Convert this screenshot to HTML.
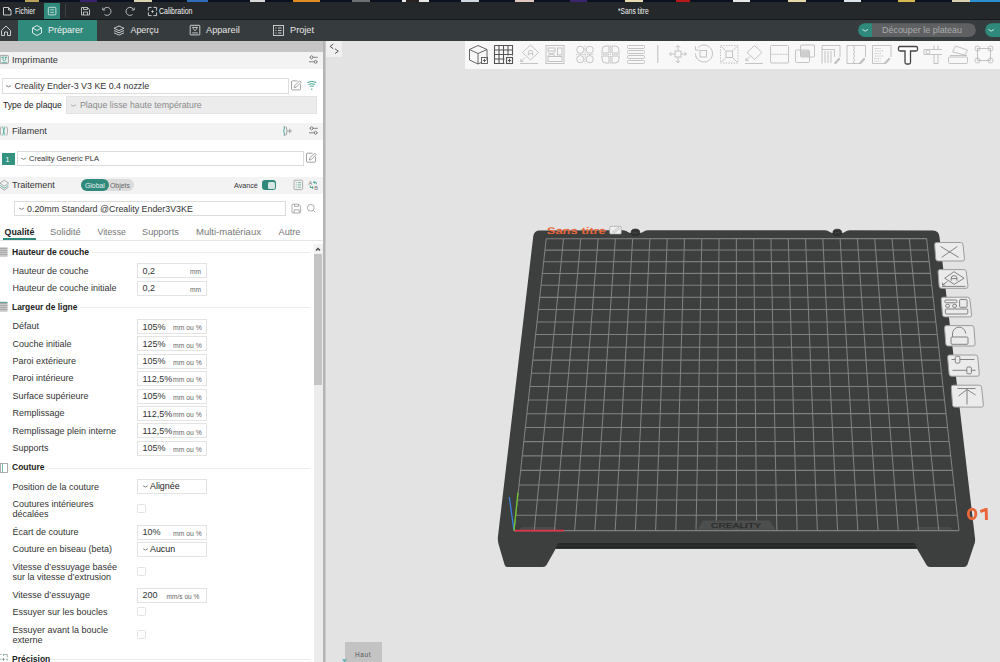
<!DOCTYPE html>
<html><head><meta charset="utf-8"><style>
html,body{margin:0;padding:0;width:1000px;height:662px;overflow:hidden;background:#e3e3e3}
body{position:relative;font-family:"Liberation Sans",sans-serif}
.t{position:absolute;white-space:nowrap}
.r{position:absolute}
</style></head><body>
<div class="r" style="left:0px;top:0px;width:1000px;height:3px;background:#0c1120;"></div>
<div class="r" style="left:25px;top:0px;width:14px;height:2px;background:#b9a15a;"></div>
<div class="r" style="left:80px;top:0px;width:17px;height:2px;background:#3b2270;"></div>
<div class="r" style="left:134px;top:0px;width:18px;height:2px;background:#d9d3b0;"></div>
<div class="r" style="left:187px;top:0px;width:21px;height:2px;background:#2f6db8;"></div>
<div class="r" style="left:250px;top:0px;width:15px;height:2px;background:#d8d8d8;"></div>
<div class="r" style="left:293px;top:0px;width:27px;height:2px;background:#e08a22;"></div>
<div class="r" style="left:352px;top:0px;width:18px;height:2px;background:#6e7174;"></div>
<div class="r" style="left:402px;top:0px;width:4px;height:2px;background:#e8e8e8;"></div>
<div class="r" style="left:406px;top:0px;width:13px;height:2px;background:#2a2222;"></div>
<div class="r" style="left:419px;top:0px;width:10px;height:2px;background:#e8e8e8;"></div>
<div class="r" style="left:461px;top:0px;width:18px;height:2px;background:#cfd8e0;"></div>
<div class="r" style="left:515px;top:0px;width:19px;height:2px;background:#e0c8c0;"></div>
<div class="r" style="left:570px;top:0px;width:17px;height:2px;background:#3a2470;"></div>
<div class="r" style="left:625px;top:0px;width:18px;height:2px;background:#e8dcb0;"></div>
<div class="r" style="left:676px;top:0px;width:14px;height:2px;background:#b81818;"></div>
<div class="r" style="left:733px;top:0px;width:17px;height:2px;background:#e8e8e8;"></div>
<div class="r" style="left:788px;top:0px;width:18px;height:2px;background:#e6d9a8;"></div>
<div class="r" style="left:844px;top:0px;width:17px;height:2px;background:#dde4ea;"></div>
<div class="r" style="left:898px;top:0px;width:17px;height:2px;background:#d8b850;"></div>
<div class="r" style="left:952px;top:0px;width:18px;height:2px;background:#d8d0b0;"></div>
<div class="r" style="left:970px;top:0px;width:30px;height:2px;background:#2a8fd0;"></div>
<div class="r" style="left:0px;top:2px;width:1000px;height:17px;background:#24282b;"></div>
<div class="r" style="left:44px;top:3px;width:16px;height:16px;background:#2f8a7b;"></div>
<div class="r" style="left:65px;top:4px;width:1px;height:13px;background:#3d4245;"></div>
<svg class="r" style="left:0;top:0" width="200" height="19" viewBox="0 0 200 19"><path d="M3.5 7.5 h5 l2.5 2.5 v5 h-7.5z M8.5 7.5 v2.5 h2.5" fill="none" stroke="#d8d8d8" stroke-width="0.9"/><rect x="48.3" y="7.3" width="7.6" height="7.6" rx="1.2" fill="none" stroke="#e8f4f2" stroke-width="0.8"/><path d="M50.2 9.8h3.8 M50.2 12.3h3.8" stroke="#e8f4f2" stroke-width="0.7"/><path d="M81.5 7.5h6l2 2v5.5h-8z M83.5 7.5v2h4v-2 M83.5 15v-3h4v3" fill="none" stroke="#c8c8c8" stroke-width="0.9"/><path d="M103.5 9.5 a4 4 0 1 1 1 5" fill="none" stroke="#c8c8c8" stroke-width="0.9"/><path d="M102.8 7.6v2.4h2.4" fill="none" stroke="#c8c8c8" stroke-width="0.9"/><path d="M133.5 9.5 a4 4 0 1 0 -1 5" fill="none" stroke="#c8c8c8" stroke-width="0.9"/><path d="M134.2 7.6v2.4h-2.4" fill="none" stroke="#c8c8c8" stroke-width="0.9"/><path d="M148.4 10.6v-3.2h3.2 M153.4 7.4h3.2v3.2 M156.6 12.4v3.2h-3.2 M151.6 15.6h-3.2v-3.2 M152.5 10.3v2.4 M151.3 11.5h2.4" fill="none" stroke="#d8d8d8" stroke-width="0.9"/></svg>
<div class="t" style="left:15px;top:7.49px;font-size:8.3px;line-height:9.271px;color:#f4f4f4;font-weight:normal;letter-spacing:0px;transform:scaleX(0.81);transform-origin:0 0">Fichier</div>
<div class="t" style="left:159px;top:7.49px;font-size:8.3px;line-height:9.271px;color:#f4f4f4;font-weight:normal;letter-spacing:0px;transform:scaleX(0.845);transform-origin:0 0">Calibration</div>
<div class="t" style="left:618px;top:7.49px;font-size:8.3px;line-height:9.271px;color:#f4f4f4;font-weight:normal;letter-spacing:0px;transform:scaleX(0.8);transform-origin:0 0">*Sans titre</div>
<div class="r" style="left:0px;top:19px;width:1000px;height:1px;background:#161a1c;"></div>
<div class="r" style="left:0px;top:20px;width:1000px;height:21px;background:#363c3e;"></div>
<div class="r" style="left:18px;top:20px;width:79px;height:21px;background:#2f8a7b;"></div>
<svg class="r" style="left:0;top:19px" width="330" height="22" viewBox="0 19 330 22"><path d="M1.5 35.5v-5l4.5-4.5 4.5 4.5v5h-3v-3.5h-3v3.5z" fill="none" stroke="#dcdcdc" stroke-width="0.9"/><path d="M37 25.5l4.5 2.5v5l-4.5 2.5-4.5-2.5v-5z M32.5 28l4.5 2.5 4.5-2.5" fill="none" stroke="#eaf5f3" stroke-width="0.9"/><path d="M119 26l5 2.3-5 2.3-5-2.3z M114 30.5l5 2.3 5-2.3 M114 32.8l5 2.3 5-2.3" fill="none" stroke="#d8d8d8" stroke-width="0.9"/><rect x="190.2" y="25.3" width="9.6" height="9.6" rx="0.6" fill="none" stroke="#d8d8d8" stroke-width="0.9"/><path d="M192.2 27.4h5.6 M193.3 27.4v1.4l1.7 2 1.7-2v-1.4 M192.2 32.9h5.6" fill="none" stroke="#d8d8d8" stroke-width="0.85"/><rect x="273.5" y="25.5" width="10" height="10" fill="none" stroke="#d8d8d8" stroke-width="0.9"/><path d="M275.5 28h1 M278 28h3.5 M275.5 30.5h1 M278 30.5h3.5 M275.5 33h1 M278 33h3.5" fill="none" stroke="#d8d8d8" stroke-width="0.9"/></svg>
<div class="t" style="left:48px;top:25.36px;font-size:9px;line-height:10.053px;color:#f2f2f2;font-weight:normal;letter-spacing:0px;">Préparer</div>
<div class="t" style="left:130.5px;top:26.45px;font-size:8.9px;line-height:9.941px;color:#e6e6e6;font-weight:normal;letter-spacing:0px;">Aperçu</div>
<div class="t" style="left:206px;top:25.17px;font-size:9.2px;line-height:10.276px;color:#e6e6e6;font-weight:normal;letter-spacing:0px;">Appareil</div>
<div class="t" style="left:290px;top:25.17px;font-size:9.2px;line-height:10.276px;color:#e6e6e6;font-weight:normal;letter-spacing:0px;">Projet</div>
<svg class="r" style="left:850px;top:19px" width="150" height="22" viewBox="850 19 150 22"><path d="M872 23.3 h-7 a6.85 6.85 0 0 0 0 13.7 h7z" fill="#2f8a7b"/><path d="M872 23.3 h97 a6.85 6.85 0 0 1 0 13.7 h-97z" fill="#5e6062"/><path d="M862.5 29.5l2.7 1.6 2.7-1.6" fill="none" stroke="#e8f4f2" stroke-width="0.9"/><path d="M1000 23.3 h-8 a6.85 6.85 0 0 0 0 13.7 h8z" fill="#2f8a7b"/><path d="M988.5 29.5l2.7 1.6 2.7-1.6" fill="none" stroke="#e8f4f2" stroke-width="0.9"/></svg>
<div class="t" style="left:882px;top:25.40px;font-size:8.95px;line-height:9.997px;color:#a9abad;font-weight:normal;letter-spacing:0px;">Découper le plateau</div>
<div class="r" style="left:0px;top:41px;width:323px;height:621px;background:#ffffff;"></div>
<div class="r" style="left:0px;top:41px;width:323px;height:11px;background:#c6c6c6;"></div>
<div class="r" style="left:323px;top:41px;width:1.5px;height:621px;background:#b4b4b4;"></div>
<div class="r" style="left:324.5px;top:41px;width:1.5px;height:621px;background:#cacaca;"></div>
<div class="r" style="left:0px;top:52px;width:323px;height:17px;background:#f3f3f3;"></div>
<div class="r" style="left:0px;top:123px;width:323px;height:17px;background:#f3f3f3;"></div>
<div class="r" style="left:0px;top:177px;width:323px;height:16.5px;background:#f3f3f3;"></div>
<div class="t" style="left:12px;top:53.54px;font-size:9.9px;line-height:11.058px;color:#333;font-weight:normal;letter-spacing:0px;transform:scaleX(0.93);transform-origin:0 0">Imprimante</div>
<div class="t" style="left:12px;top:124.54px;font-size:9.9px;line-height:11.058px;color:#333;font-weight:normal;letter-spacing:0px;transform:scaleX(0.92);transform-origin:0 0">Filament</div>
<div class="t" style="left:12px;top:178.54px;font-size:9.9px;line-height:11.058px;color:#333;font-weight:normal;letter-spacing:0px;transform:scaleX(0.915);transform-origin:0 0">Traitement</div>
<div class="r" style="left:2px;top:78px;width:287px;height:16px;background:#fff;border:1px solid #dcdcdc;box-sizing:border-box"></div>
<div class="t" style="left:14.5px;top:82.45px;font-size:8.9px;line-height:9.941px;color:#333;font-weight:normal;letter-spacing:0px;">Creality Ender-3 V3 KE 0.4 nozzle</div>
<div class="t" style="left:3px;top:100.72px;font-size:8.6px;line-height:9.606px;color:#222;font-weight:normal;letter-spacing:0px;">Type de plaque</div>
<div class="r" style="left:66px;top:96px;width:250.5px;height:18px;background:#ececec;border:1px solid #e3e3e3;box-sizing:border-box"></div>
<div class="t" style="left:80px;top:100.54px;font-size:8.8px;line-height:9.830px;color:#8a8a8a;font-weight:normal;letter-spacing:0px;">Plaque lisse haute température</div>
<div class="r" style="left:2px;top:152.5px;width:12.5px;height:12px;background:#349281;"></div>
<div class="t" style="left:5.5px;top:155.66px;font-size:7px;line-height:7.819px;color:#fff;font-weight:normal;letter-spacing:0px;">1</div>
<div class="r" style="left:17px;top:151px;width:287px;height:15px;background:#fff;border:1px solid #dcdcdc;box-sizing:border-box"></div>
<div class="t" style="left:29px;top:154.71px;font-size:7.5px;line-height:8.377px;color:#333;font-weight:normal;letter-spacing:0px;">Creality Generic PLA</div>
<div class="r" style="left:81px;top:179px;width:53px;height:12px;border-radius:6px;background:#dcdcdc"></div>
<div class="r" style="left:81px;top:179px;width:27.5px;height:12px;border-radius:6px;background:#2f8a7b"></div>
<div class="t" style="left:85.2px;top:182.24px;font-size:7.8px;line-height:8.713px;color:#e8f2f0;font-weight:normal;letter-spacing:0px;transform:scaleX(0.88);transform-origin:0 0">Global</div>
<div class="t" style="left:110px;top:182.24px;font-size:7.8px;line-height:8.713px;color:#666;font-weight:normal;letter-spacing:0px;transform:scaleX(0.88);transform-origin:0 0">Objets</div>
<div class="t" style="left:234px;top:182.48px;font-size:7.2px;line-height:8.042px;color:#333;font-weight:normal;letter-spacing:0px;">Avancé</div>
<div class="r" style="left:262px;top:180px;width:14px;height:10px;border-radius:3px;background:#2f8a7b"></div>
<div class="r" style="left:268px;top:181.5px;width:6.5px;height:7px;border-radius:1.5px;background:#d8e6e3"></div>
<div class="r" style="left:14px;top:201px;width:272px;height:15px;background:#fff;border:1px solid #dcdcdc;box-sizing:border-box"></div>
<div class="t" style="left:27px;top:204.95px;font-size:8.9px;line-height:9.941px;color:#333;font-weight:normal;letter-spacing:0px;">0.20mm Standard @Creality Ender3V3KE</div>
<div class="r" style="left:0px;top:240px;width:323px;height:1px;background:#e6e6e6;"></div>
<div class="r" style="left:3px;top:238.2px;width:33px;height:2px;background:#2f8a7b;"></div>
<div class="t" style="left:4.5px;top:228.49px;font-size:8.85px;line-height:9.885px;color:#222;font-weight:bold;letter-spacing:0px;">Qualité</div>
<div class="t" style="left:50px;top:226.99px;font-size:9.4px;line-height:10.500px;color:#777;font-weight:normal;letter-spacing:0px;">Solidité</div>
<div class="t" style="left:97.5px;top:227.63px;font-size:8.7px;line-height:9.718px;color:#777;font-weight:normal;letter-spacing:0px;">Vitesse</div>
<div class="t" style="left:142px;top:227.17px;font-size:9.2px;line-height:10.276px;color:#777;font-weight:normal;letter-spacing:0px;">Supports</div>
<div class="t" style="left:196px;top:226.90px;font-size:9.5px;line-height:10.611px;color:#777;font-weight:normal;letter-spacing:0px;">Multi-matériaux</div>
<div class="t" style="left:278.5px;top:227.17px;font-size:9.2px;line-height:10.276px;color:#777;font-weight:normal;letter-spacing:0px;">Autre</div>
<div class="r" style="left:314px;top:244px;width:9px;height:418px;background:#ececec;"></div>
<div class="r" style="left:314px;top:244px;width:8px;height:10px;background:#f2f2f2;"></div>
<div class="r" style="left:314px;top:254px;width:8px;height:131px;background:#c4c4c4;"></div>
<svg class="r" style="left:314px;top:244px" width="8" height="10"><path d="M2 6.5l2-2 2 2" fill="none" stroke="#444" stroke-width="1.3"/></svg>
<div class="t" style="left:12px;top:246.79px;font-size:9.405000000000001px;line-height:10.505px;color:#222;font-weight:bold;letter-spacing:0px;transform:scaleX(0.91);transform-origin:0 0">Hauteur de couche</div>
<div class="r" style="left:92px;top:252px;width:218px;height:1px;background:#ececec;"></div>
<div class="t" style="left:12px;top:302.34px;font-size:9.240000000000002px;line-height:10.321px;color:#222;font-weight:bold;letter-spacing:0px;transform:scaleX(0.91);transform-origin:0 0">Largeur de ligne</div>
<div class="r" style="left:80px;top:307.3px;width:230px;height:1px;background:#ececec;"></div>
<div class="t" style="left:12px;top:462.44px;font-size:9.350000000000001px;line-height:10.444px;color:#222;font-weight:bold;letter-spacing:0px;transform:scaleX(0.91);transform-origin:0 0">Couture</div>
<div class="r" style="left:47.5px;top:468.2px;width:262.5px;height:1px;background:#ececec;"></div>
<div class="t" style="left:12px;top:653.54px;font-size:9.350000000000001px;line-height:10.444px;color:#222;font-weight:bold;letter-spacing:0px;transform:scaleX(0.91);transform-origin:0 0">Précision</div>
<div class="r" style="left:50px;top:659px;width:260px;height:1px;background:#ececec;"></div>
<div class="t" style="left:12.5px;top:265.86px;font-size:9px;line-height:10.053px;color:#333;font-weight:normal;letter-spacing:0px;">Hauteur de couche</div>
<div class="t" style="left:12.5px;top:283.36px;font-size:9px;line-height:10.053px;color:#333;font-weight:normal;letter-spacing:0px;">Hauteur de couche initiale</div>
<div class="r" style="left:137px;top:263px;width:70px;height:15px;background:#fff;border:1px solid #e3e3e3;box-sizing:border-box"></div>
<div class="t" style="left:142.5px;top:265.86px;font-size:9px;line-height:10.053px;color:#333;font-weight:normal;letter-spacing:0px;">0,2</div>
<div class="t" style="left:190px;top:267.73px;font-size:6.6px;line-height:7.372px;color:#666;font-weight:normal;letter-spacing:0px;">mm</div>
<div class="r" style="left:137px;top:280.5px;width:70px;height:15px;background:#fff;border:1px solid #e3e3e3;box-sizing:border-box"></div>
<div class="t" style="left:142.5px;top:283.36px;font-size:9px;line-height:10.053px;color:#333;font-weight:normal;letter-spacing:0px;">0,2</div>
<div class="t" style="left:190px;top:286.23px;font-size:6.6px;line-height:7.372px;color:#666;font-weight:normal;letter-spacing:0px;">mm</div>
<div class="t" style="left:12.5px;top:320.56px;font-size:9px;line-height:10.053px;color:#333;font-weight:normal;letter-spacing:0px;">Défaut</div>
<div class="r" style="left:137px;top:319.0px;width:70px;height:15px;background:#fff;border:1px solid #e3e3e3;box-sizing:border-box"></div>
<div class="t" style="left:142.5px;top:321.86px;font-size:9px;line-height:10.053px;color:#333;font-weight:normal;letter-spacing:0px;">105%</div>
<div class="t" style="left:173px;top:323.55px;font-size:6.8px;line-height:7.596px;color:#666;font-weight:normal;letter-spacing:0px;">mm ou %</div>
<div class="t" style="left:12.5px;top:338.96px;font-size:9px;line-height:10.053px;color:#333;font-weight:normal;letter-spacing:0px;">Couche initiale</div>
<div class="r" style="left:137px;top:336.4px;width:70px;height:15px;background:#fff;border:1px solid #e3e3e3;box-sizing:border-box"></div>
<div class="t" style="left:142.5px;top:339.25px;font-size:9px;line-height:10.053px;color:#333;font-weight:normal;letter-spacing:0px;">125%</div>
<div class="t" style="left:173px;top:341.95px;font-size:6.8px;line-height:7.596px;color:#666;font-weight:normal;letter-spacing:0px;">mm ou %</div>
<div class="t" style="left:12.5px;top:356.16px;font-size:9px;line-height:10.053px;color:#333;font-weight:normal;letter-spacing:0px;">Paroi extérieure</div>
<div class="r" style="left:137px;top:353.8px;width:70px;height:15px;background:#fff;border:1px solid #e3e3e3;box-sizing:border-box"></div>
<div class="t" style="left:142.5px;top:355.66px;font-size:9px;line-height:10.053px;color:#333;font-weight:normal;letter-spacing:0px;">105%</div>
<div class="t" style="left:173px;top:359.35px;font-size:6.8px;line-height:7.596px;color:#666;font-weight:normal;letter-spacing:0px;">mm ou %</div>
<div class="t" style="left:12.5px;top:372.56px;font-size:9px;line-height:10.053px;color:#333;font-weight:normal;letter-spacing:0px;">Paroi intérieure</div>
<div class="r" style="left:137px;top:371.2px;width:70px;height:15px;background:#fff;border:1px solid #e3e3e3;box-sizing:border-box"></div>
<div class="t" style="left:142.5px;top:374.06px;font-size:9px;line-height:10.053px;color:#333;font-weight:normal;letter-spacing:0px;">112,5%</div>
<div class="t" style="left:173px;top:375.75px;font-size:6.8px;line-height:7.596px;color:#666;font-weight:normal;letter-spacing:0px;">mm ou %</div>
<div class="t" style="left:12.5px;top:390.96px;font-size:9px;line-height:10.053px;color:#333;font-weight:normal;letter-spacing:0px;">Surface supérieure</div>
<div class="r" style="left:137px;top:388.6px;width:70px;height:15px;background:#fff;border:1px solid #e3e3e3;box-sizing:border-box"></div>
<div class="t" style="left:142.5px;top:391.46px;font-size:9px;line-height:10.053px;color:#333;font-weight:normal;letter-spacing:0px;">105%</div>
<div class="t" style="left:173px;top:394.15px;font-size:6.8px;line-height:7.596px;color:#666;font-weight:normal;letter-spacing:0px;">mm ou %</div>
<div class="t" style="left:12.5px;top:407.66px;font-size:9px;line-height:10.053px;color:#333;font-weight:normal;letter-spacing:0px;">Remplissage</div>
<div class="r" style="left:137px;top:406.0px;width:70px;height:15px;background:#fff;border:1px solid #e3e3e3;box-sizing:border-box"></div>
<div class="t" style="left:142.5px;top:408.86px;font-size:9px;line-height:10.053px;color:#333;font-weight:normal;letter-spacing:0px;">112,5%</div>
<div class="t" style="left:173px;top:410.55px;font-size:6.8px;line-height:7.596px;color:#666;font-weight:normal;letter-spacing:0px;">mm ou %</div>
<div class="t" style="left:12.5px;top:425.86px;font-size:9px;line-height:10.053px;color:#333;font-weight:normal;letter-spacing:0px;">Remplissage plein interne</div>
<div class="r" style="left:137px;top:423.4px;width:70px;height:15px;background:#fff;border:1px solid #e3e3e3;box-sizing:border-box"></div>
<div class="t" style="left:142.5px;top:426.25px;font-size:9px;line-height:10.053px;color:#333;font-weight:normal;letter-spacing:0px;">112,5%</div>
<div class="t" style="left:173px;top:428.95px;font-size:6.8px;line-height:7.596px;color:#666;font-weight:normal;letter-spacing:0px;">mm ou %</div>
<div class="t" style="left:12.5px;top:443.16px;font-size:9px;line-height:10.053px;color:#333;font-weight:normal;letter-spacing:0px;">Supports</div>
<div class="r" style="left:137px;top:440.79999999999995px;width:70px;height:15px;background:#fff;border:1px solid #e3e3e3;box-sizing:border-box"></div>
<div class="t" style="left:142.5px;top:442.65px;font-size:9px;line-height:10.053px;color:#333;font-weight:normal;letter-spacing:0px;">105%</div>
<div class="t" style="left:173px;top:446.35px;font-size:6.8px;line-height:7.596px;color:#666;font-weight:normal;letter-spacing:0px;">mm ou %</div>
<div class="t" style="left:12.5px;top:482.16px;font-size:9px;line-height:10.053px;color:#333;font-weight:normal;letter-spacing:0px;">Position de la couture</div>
<div class="r" style="left:137px;top:479.4px;width:70px;height:14.5px;background:#fff;border:1px solid #e3e3e3;box-sizing:border-box"></div>
<svg class="r" style="left:142px;top:479.4px" width="8" height="14"><path d="M1.2 6.8l2.3 1.3 2.3-1.3" fill="none" stroke="#666" stroke-width="0.8"/></svg>
<div class="t" style="left:150px;top:481.85px;font-size:8.9px;line-height:9.941px;color:#222;font-weight:normal;letter-spacing:0px;">Alignée</div>
<div class="t" style="left:12.5px;top:499.25px;font-size:9px;line-height:10.053px;color:#333;font-weight:normal;letter-spacing:0px;">Coutures intérieures</div>
<div class="t" style="left:12.5px;top:508.56px;font-size:9px;line-height:10.053px;color:#333;font-weight:normal;letter-spacing:0px;">décalées</div>
<div class="r" style="left:137.3px;top:504.4px;width:9px;height:9px;border:1px solid #e2e2e2;border-radius:1.5px;box-sizing:border-box;background:#fff"></div>
<div class="t" style="left:12.5px;top:527.06px;font-size:9px;line-height:10.053px;color:#333;font-weight:normal;letter-spacing:0px;">Écart de couture</div>
<div class="r" style="left:137px;top:524.5px;width:70px;height:15px;background:#fff;border:1px solid #e3e3e3;box-sizing:border-box"></div>
<div class="t" style="left:142.5px;top:527.36px;font-size:9px;line-height:10.053px;color:#333;font-weight:normal;letter-spacing:0px;">10%</div>
<div class="t" style="left:173px;top:530.05px;font-size:6.8px;line-height:7.596px;color:#666;font-weight:normal;letter-spacing:0px;">mm ou %</div>
<div class="t" style="left:12.5px;top:544.25px;font-size:9px;line-height:10.053px;color:#333;font-weight:normal;letter-spacing:0px;">Couture en biseau (beta)</div>
<div class="r" style="left:137px;top:542.4px;width:70px;height:14.5px;background:#fff;border:1px solid #e3e3e3;box-sizing:border-box"></div>
<svg class="r" style="left:142px;top:542.4px" width="8" height="14"><path d="M1.2 6.8l2.3 1.3 2.3-1.3" fill="none" stroke="#666" stroke-width="0.8"/></svg>
<div class="t" style="left:150px;top:544.85px;font-size:8.9px;line-height:9.941px;color:#222;font-weight:normal;letter-spacing:0px;">Aucun</div>
<div class="t" style="left:12.5px;top:561.96px;font-size:9px;line-height:10.053px;color:#333;font-weight:normal;letter-spacing:0px;">Vitesse d’essuyage basée</div>
<div class="t" style="left:12.5px;top:571.96px;font-size:9px;line-height:10.053px;color:#333;font-weight:normal;letter-spacing:0px;">sur la vitesse d’extrusion</div>
<div class="r" style="left:137.3px;top:566.6999999999999px;width:9px;height:9px;border:1px solid #e2e2e2;border-radius:1.5px;box-sizing:border-box;background:#fff"></div>
<div class="t" style="left:12.5px;top:589.86px;font-size:9px;line-height:10.053px;color:#333;font-weight:normal;letter-spacing:0px;">Vitesse d’essuyage</div>
<div class="r" style="left:137px;top:587.5px;width:70px;height:15px;background:#fff;border:1px solid #e3e3e3;box-sizing:border-box"></div>
<div class="t" style="left:142.5px;top:590.36px;font-size:9px;line-height:10.053px;color:#333;font-weight:normal;letter-spacing:0px;">200</div>
<div class="t" style="left:166.5px;top:593.23px;font-size:6.6px;line-height:7.372px;color:#666;font-weight:normal;letter-spacing:0px;">mm/s ou %</div>
<div class="t" style="left:12.5px;top:607.36px;font-size:9px;line-height:10.053px;color:#333;font-weight:normal;letter-spacing:0px;">Essuyer sur les boucles</div>
<div class="r" style="left:137.3px;top:607.1px;width:9px;height:9px;border:1px solid #e2e2e2;border-radius:1.5px;box-sizing:border-box;background:#fff"></div>
<div class="t" style="left:12.5px;top:625.36px;font-size:9px;line-height:10.053px;color:#333;font-weight:normal;letter-spacing:0px;">Essuyer avant la boucle</div>
<div class="t" style="left:12.5px;top:635.36px;font-size:9px;line-height:10.053px;color:#333;font-weight:normal;letter-spacing:0px;">externe</div>
<div class="r" style="left:137.3px;top:629.6999999999999px;width:9px;height:9px;border:1px solid #e2e2e2;border-radius:1.5px;box-sizing:border-box;background:#fff"></div>
<svg class="r" style="left:0;top:40px" width="323" height="622" viewBox="0 40 323 622"><rect x="0.2" y="55.4" width="8.2" height="8.2" rx="0.8" fill="none" stroke="#8f8f8f" stroke-width="0.8"/><path d="M1.5 62.4h5.6" stroke="#4aa898" stroke-width="0.8"/><path d="M1.4 57.2h5.8 M3 57.2 v2.3 l1.3 1.6 1.3 -1.6 v-2.3" fill="none" stroke="#3a9a88" stroke-width="0.9"/><circle cx="4.3" cy="57.7" r="0.6" fill="#fff"/><g fill="none" stroke="#666" stroke-width="0.8"><path d="M309.5 57.3h0.8 M313 57.3h4.8 M309 61.8h5.2 M317 61.8h0.8"/><ellipse cx="311.6" cy="57.3" rx="1.2" ry="1.6"/><ellipse cx="315.6" cy="61.8" rx="1.2" ry="1.6"/><path d="M309.5 128.3h0.8 M313 128.3h4.8 M309 132.8h5.2 M317 132.8h0.8"/><ellipse cx="311.6" cy="128.3" rx="1.2" ry="1.6"/><ellipse cx="315.6" cy="132.8" rx="1.2" ry="1.6"/></g><g fill="none" stroke="#8a8a8a" stroke-width="0.8"><path d="M297.5 80.9h-5a1 1 0 0 0 -1 1v7a1 1 0 0 0 1 1h7a1 1 0 0 0 1 -1v-4.5"/><path d="M294.3 87.7l0.4 -1.9 5 -5 1.5 1.5 -5 5z"/><path d="M312.5 153.2h-5a1 1 0 0 0 -1 1v7a1 1 0 0 0 1 1h7a1 1 0 0 0 1 -1v-4.5"/><path d="M309.3 160l0.4 -1.9 5 -5 1.5 1.5 -5 5z"/></g><g fill="none" stroke="#2b9b8a" stroke-width="0.9"><path d="M307.3 82.5a8 6 0 0 1 9 0 M308.5 84.5a6 4.5 0 0 1 6.6 0 M309.8 86.4a3.5 2.6 0 0 1 4 0"/><path d="M311.8 88.5v1.5"/></g><g fill="none" stroke-width="0.8"><path d="M1 126.5q-1.6 4.5 0 9 M6.8 126.5q1.6 4.5 0 9" stroke="#999"/><path d="M2.6 126.5q2.6 4.5 0 9 M5 126.5q-2.6 4.5 0 9" stroke="#4aa898"/></g><g fill="none" stroke-width="0.8"><path d="M284.8 126.8q-2.3 4.2 0 8.4" stroke="#2b9b8a"/><path d="M283.5 126.8h1.8 M283.5 135.2h1.8 M286.2 127q1.6 4 0 8" stroke="#8a8a8a"/><path d="M287.5 131h4.5 M289.75 128.7v4.6" stroke="#8a8a8a"/></g><g fill="none" stroke-width="0.8"><path d="M4.3 180.2l4.2 3-4.2 3-4.2-3z" stroke="#999"/><path d="M0.1 185.3l4.2 3 4.2-3" stroke="#4aa898"/><path d="M0.1 187.2l4.2 3 4.2-3" stroke="#999"/></g><g fill="none" stroke-width="0.8"><rect x="294" y="180.2" width="8.6" height="9.4" rx="1" stroke="#999"/><path d="M295.8 182.6h0.9 M297.8 182.6h3.2 M295.8 184.9h0.9 M297.8 184.9h3.2 M295.8 187.2h0.9 M297.8 187.2h3.2" stroke="#5a9f92"/></g><g fill="none" stroke="#3a9a88" stroke-width="0.9"><path d="M316.2 184.3v-2h-2.8 M314.5 181.2l-1.2 1.1 1.2 1.1 M310.3 185.5v2h2.8 M312 186.4l1.2 1.1-1.2 1.1"/></g><text x="308.6" y="185.3" font-size="5.6" fill="#777" font-family="Liberation Sans">A</text><text x="314.2" y="189.6" font-size="5.6" fill="#777" font-family="Liberation Sans">B</text><g fill="none" stroke="#999" stroke-width="0.8"><path d="M292.8 204.2h5.8l2 2v6a0.8 0.8 0 0 1 -0.8 0.8h-7a0.8 0.8 0 0 1 -0.8 -0.8v-7.2a0.8 0.8 0 0 1 0.8 -0.8z M294.5 204.2v2.2h4v-2.2 M294.2 213v-3.2h5v3.2"/><circle cx="310.8" cy="207.8" r="3.4"/><path d="M313.3 210.3l2 2"/></g><g fill="none" stroke="#666" stroke-width="0.8"><path d="M6 85.5l2.5 1.4 2.5-1.4"/><path d="M71 104.8l2.5 1.4 2.5-1.4" stroke="#999"/><path d="M21 158l2.5 1.4 2.5-1.4"/><path d="M19 208l2.5 1.4 2.5-1.4"/></g><g fill="#a8a8a8"><rect x="0" y="247.5" width="7.5" height="9"/><rect x="0" y="302.5" width="7.5" height="9"/></g><g stroke="#e0e0e0" stroke-width="0.6"><path d="M0 249.5h7.5 M0 251.5h7.5 M0 253.5h7.5 M0 255.5h7.5 M0 304.5h7.5 M0 306.5h7.5 M0 308.5h7.5 M0 310.5h7.5"/></g><path d="M0 302.3h7.5" stroke="#2b8b7a" stroke-width="0.8"/><rect x="0.5" y="463.5" width="7" height="9" fill="none" stroke="#999" stroke-width="0.8"/><path d="M2.5 464v8" stroke="#7fbfb3" stroke-width="1"/><path d="M0 654.5h1.5 M3 654.5h4.3v3 M7.3 659v1.5" fill="none" stroke="#999" stroke-width="0.8"/><path d="M3.5 654.5v1.3 M0 659.3h1.3 M6 659.3h1.3" stroke="#4aa898" stroke-width="0.8"/><path d="M2.3 659.3h2.4 M3.5 658.1v2.4" stroke="#777" stroke-width="0.8"/></svg>
<div class="r" style="left:326px;top:41px;width:674px;height:621px;background:#e3e3e3;"></div>
<div class="r" style="left:326px;top:41px;width:16px;height:16px;background:#f0f0f0;"></div>
<svg class="r" style="left:326px;top:41px" width="16" height="16"><path d="M7.3 3l-3.2 2.4 3.2 2.4 M9 7.8l3.3 2.4-3.3 2.4" fill="none" stroke="#444" stroke-width="0.9"/></svg>
<div class="r" style="left:464.5px;top:41px;width:535.5px;height:27.6px;background:#f8f8f8;"></div>
<div class="r" style="left:344.5px;top:641.5px;width:37.2px;height:21px;background:#c3c3c3;"></div>
<svg class="r" style="left:340px;top:655px" width="10" height="7"><path d="M2 4.5 L7 4.5 L4.5 7 Z" fill="#4a9be0"/><path d="M3.2 5.2 L5.8 5.2 L4.5 6.6 Z" fill="#6fc52a"/></svg>
<div class="t" style="left:355px;top:650.51px;font-size:6.4px;line-height:7.149px;color:#555;font-weight:normal;letter-spacing:0.7px;">Haut</div>
<svg class="r" style="left:0;top:0" width="1000" height="662" viewBox="0 0 1000 662"><path d="M533.3 236 Q534 230.4 540 230.4 L622.9 230.3 Q625.9 230.3 627.9 232 Q629.4 233.1 630.9 233.1 L639.9 233.1 Q641.4 233.1 642.9 232 Q644.9 230.3 647.9 230.3 L824.8 230.3 Q827.8 230.3 829.8 232 Q831.3 233.1 832.8 233.1 L841.8 233.1 Q843.3 233.1 844.8 232 Q846.8 230.3 849.8 230.3 L933 230.4 Q939 230.4 939.5 237 L975 538 Q975.5 542 974 545 L967.5 564.5 Q966.5 567 963.5 567 L930 567 Q927.5 567 926.5 565 L917 548.7 L555.7 548.7 L546.5 565 Q545.5 567 543 567 L507.5 567 Q505 567 504.5 564.5 L498.5 544 Q497.5 540 498 536 Z" fill="#3d3e3e"/><ellipse cx="635.4" cy="232.4" rx="4.3" ry="3.3" fill="#313232" stroke="#252626" stroke-width="0.7"/><ellipse cx="837.3" cy="232.5" rx="4.3" ry="3.3" fill="#313232" stroke="#252626" stroke-width="0.7"/><path d="M632.8 233.2 q2.6 -1.8 5.2 0" fill="none" stroke="#484949" stroke-width="0.8"/><path d="M834.7 233.3 q2.6 -1.8 5.2 0" fill="none" stroke="#484949" stroke-width="0.8"/><path d="M559.5 543 L913 543 Q914.5 543 915.3 544.3 L917.3 548.7 L555.5 548.7 L557.5 544.3 Q558.2 543 559.5 543 Z" fill="#262828"/><path d="M557.2 545 L915.6 545 L916.1 546.1 L556.7 546.1 Z" fill="#303232"/><path d="M519 529.8 L522 527 L555 527 L558 529.8 Z" fill="#4a4b4b"/><path d="M914 529.8 L917 527 L950 527 L953 529.8 Z" fill="#4a4b4b"/><path d="M546.20 238.70L514.00 530.60 M546.20 238.70L926.60 238.60 M563.49 238.70L534.22 530.60 M544.94 250.12L927.87 250.02 M580.77 238.69L554.44 530.60 M543.66 261.69L929.15 261.59 M598.06 238.69L574.66 530.60 M542.37 273.41L930.45 273.32 M615.34 238.68L594.88 530.60 M541.06 285.30L931.77 285.21 M632.63 238.68L615.11 530.60 M539.73 297.35L933.11 297.26 M649.92 238.67L635.33 530.60 M538.38 309.56L934.46 309.48 M667.21 238.67L655.55 530.60 M537.02 321.94L935.84 321.87 M684.50 238.66L675.78 530.60 M535.63 334.50L937.23 334.42 M701.79 238.66L696.00 530.60 M534.23 347.23L938.65 347.16 M719.08 238.65L716.23 530.60 M532.80 360.14L940.08 360.07 M736.37 238.65L736.46 530.60 M531.36 373.23L941.53 373.17 M753.66 238.65L756.68 530.60 M529.89 386.51L943.01 386.46 M770.95 238.64L776.91 530.60 M528.41 399.98L944.50 399.93 M788.24 238.64L797.14 530.60 M526.90 413.65L946.02 413.61 M805.54 238.63L817.37 530.60 M525.37 427.52L947.56 427.48 M822.83 238.63L837.60 530.60 M523.82 441.60L949.12 441.56 M840.12 238.62L857.83 530.60 M522.24 455.88L950.71 455.85 M857.42 238.62L878.06 530.60 M520.64 470.38L952.31 470.35 M874.71 238.61L898.30 530.60 M519.02 485.09L953.95 485.07 M892.01 238.61L918.53 530.60 M517.37 500.03L955.61 500.02 M909.30 238.60L938.76 530.60 M515.70 515.20L957.29 515.19 M926.60 238.60L959.00 530.60 M514.00 530.60L959.00 530.60" stroke="#7f807f" stroke-width="1.05" fill="none"/><path d="M697.4 529.8 L702.8 520.6 L769.4 520.6 L775.4 529.8 Z" fill="#4d4e4e"/><text x="711" y="528.2" font-size="6.4" fill="#2a2b2b" stroke="#2a2b2b" stroke-width="0.25" font-family="Liberation Sans" textLength="50" lengthAdjust="spacingAndGlyphs">CREALITY</text><path d="M514 530.6 L564 530.6" stroke="#e0354a" stroke-width="1.8"/><path d="M514 530.6 L509.3 497" stroke="#3d7fe0" stroke-width="1.3"/><path d="M514 530.6 L518 492.5" stroke="#6fc52a" stroke-width="1.3"/><text x="0" y="0" transform="translate(546.5 233.6) skewX(-6)" font-size="9.6" font-weight="bold" fill="#e8673a" font-family="Liberation Sans" textLength="59" lengthAdjust="spacingAndGlyphs">Sans titre</text><rect x="609.7" y="226.3" width="11.6" height="7.8" rx="1.2" fill="#eeeeee" stroke="#9a9a9a" stroke-width="0.6"/><path d="M611.8 232.6 l7.2 -5.6 M613.2 233.6 l7.2 -5.6" stroke="#b0b0b0" stroke-width="0.7"/><ellipse cx="972.1" cy="513.9" rx="3.75" ry="4.8" stroke="#e8673a" stroke-width="2.9" fill="none"/><path d="M979.7 510.3 L985.3 507.9 L987.5 507.9 Q987.9 514 987.9 519.9 L985 519.9 Q985 515 984.7 511.5 L980.9 513 Z" fill="#e8673a"/><path d="M934.67 244.69 Q934.50 242.50 936.70 242.50 L960.60 242.50 Q962.80 242.50 963.02 244.69 L964.48 258.81 Q964.70 261.00 962.50 261.00 L938.10 261.00 Q935.90 261.00 935.73 258.81 Z" fill="#ebebeb" stroke="#9c9c9c" stroke-width="1"/><path d="M938.06 271.79 Q937.90 269.60 940.10 269.60 L963.80 269.60 Q966.00 269.60 966.26 271.78 L967.94 286.12 Q968.20 288.30 966.00 288.30 L941.50 288.30 Q939.30 288.30 939.14 286.11 Z" fill="#ebebeb" stroke="#9c9c9c" stroke-width="1"/><path d="M941.19 299.39 Q941.00 297.20 943.20 297.20 L967.40 297.20 Q969.60 297.20 969.86 299.39 L971.64 314.71 Q971.90 316.90 969.70 316.90 L944.90 316.90 Q942.70 316.90 942.51 314.71 Z" fill="#ebebeb" stroke="#9c9c9c" stroke-width="1"/><path d="M944.56 327.79 Q944.40 325.60 946.60 325.60 L971.60 325.60 Q973.80 325.60 973.96 327.79 L975.14 343.81 Q975.30 346.00 973.10 346.00 L948.10 346.00 Q945.90 346.00 945.74 343.81 Z" fill="#ebebeb" stroke="#9c9c9c" stroke-width="1"/><path d="M947.60 357.19 Q947.40 355.00 949.60 355.00 L975.40 355.00 Q977.60 355.00 977.80 357.19 L979.30 374.01 Q979.50 376.20 977.30 376.20 L951.50 376.20 Q949.30 376.20 949.10 374.01 Z" fill="#ebebeb" stroke="#9c9c9c" stroke-width="1"/><path d="M951.26 387.39 Q951.10 385.20 953.30 385.20 L979.20 385.20 Q981.40 385.20 981.62 387.39 L983.38 404.91 Q983.60 407.10 981.40 407.10 L954.90 407.10 Q952.70 407.10 952.54 404.91 Z" fill="#ebebeb" stroke="#9c9c9c" stroke-width="1"/><g fill="none" stroke="#777" stroke-width="0.9"><path d="M940.6 246.5 L958.7 257.4 M957.3 246.5 L941.6 257.4"/><path d="M954 271.7 L964.1 278.2 L954.2 284.3 L944.7 278.2 Z"/><path d="M951.2 280.8 v-2.6 a2.9 2.6 0 0 1 5.8 0 v2.6 M951.2 278.6h5.8"/><path d="M942 286.4 L965.5 286.4 M947.5 281.5 l-5 3.5 M942.5 285 h2.3 M942.5 285 v-2.3"/><rect x="944.7" y="300" width="12.3" height="2.8" rx="1.4"/><rect x="959.6" y="299.5" width="7.5" height="7.8" rx="1"/><ellipse cx="947.6" cy="305.9" rx="2" ry="1.6"/><ellipse cx="954.6" cy="305.9" rx="2" ry="1.6"/><rect x="945.4" y="309" width="22.4" height="5" rx="1"/><path d="M952.5 337 v-3 a6.6 6.6 0 0 1 13.2 -0.5"/><rect x="951" y="337" width="17" height="7.3" rx="1"/><path d="M951.5 359.5 h23 M952.5 370.3 h23"/><rect x="955.3" y="356.3" width="4.6" height="6.8" rx="1.2" fill="#ebebeb"/><rect x="966.8" y="367" width="4.6" height="6.8" rx="1.2" fill="#ebebeb"/><path d="M957.5 388.5 h18 M967 389 v15.5 M958.5 396 l8.5 -6.5 8.5 5.5"/></g></svg>
<svg class="r" style="left:0;top:0" width="1000" height="70" viewBox="0 0 1000 70"><g fill="none" stroke="#555" stroke-width="0.9"><path d="M478 45.5 L487 49.5 L487 60 M478 45.5 L469.5 49.5 L469.5 60 L478 64 L482 62.2 M469.5 49.5 L478 53.5 L487 49.5 M478 53.5 V64"/><rect x="481.5" y="57.5" width="6" height="6"/><path d="M484.5 58.8v3.4 M482.8 60.5h3.4"/></g><g fill="none" stroke="#555" stroke-width="1.1"><path d="M494.5 45.5h18v10 M494.5 45.5v18h10 M499 45.5v18 M503.5 45.5v18 M508 45.5v10 M494.5 50h18 M494.5 54.5h18 M494.5 59h10"/><rect x="506.5" y="57.5" width="6" height="6"/><path d="M509.5 58.8v3.4 M507.8 60.5h3.4"/></g><g fill="none" stroke="#bdbdbd" stroke-width="0.9"><path d="M530.5 45 L538.5 52.5 L530.5 60 L522.5 52.5 Z"/><path d="M528.3 55.5v-3a2.2 2.2 0 0 1 4.4 0v3 M528.3 53.7h4.4"/><path d="M520 63.5h18 M525 57.5l-4 4 M520.8 61.5h2.5 M520.8 61.5v-2.5"/></g><g fill="none" stroke="#bdbdbd" stroke-width="0.9"><rect x="546" y="45.5" width="18" height="18"/><rect x="548" y="48" width="7" height="3"/><rect x="557.5" y="48" width="4.5" height="7"/><path d="M548 52.5 l7 3 M548 55.5 l7 -3"/><rect x="548" y="56.5" width="14" height="5"/></g><g fill="none" stroke="#bdbdbd" stroke-width="0.9"><circle cx="580.3" cy="49.8" r="3.6"/><circle cx="589.7" cy="49.8" r="3.6"/><circle cx="580.3" cy="59.2" r="3.6"/><circle cx="589.7" cy="59.2" r="3.6"/><path d="M576 54.5h18 M585 45.5v18" stroke-dasharray="1.2 1"/></g><g fill="none" stroke="#bdbdbd" stroke-width="0.9"><path d="M609 46 h-3 a4 4 0 0 0 -4 4 v3 h7z M612 46 h3 a4 4 0 0 1 4 4 v3 h-7z M609 63 h-3 a4 4 0 0 1 -4 -4 v-3 h7z M612 63 h3 a4 4 0 0 0 4 -4 v-3 h-7z"/><path d="M601 54.5h19 M610.5 45v19" stroke-dasharray="1.2 1"/></g><g fill="none" stroke="#bdbdbd" stroke-width="0.9"><rect x="627.5" y="45.5" width="17" height="3" rx="1"/><rect x="627.5" y="50.5" width="17" height="3" rx="1"/><rect x="627.5" y="55.5" width="17" height="3" rx="1"/><rect x="627.5" y="60.5" width="17" height="3" rx="1"/></g><path d="M657.8 45v18" stroke="#bdbdbd" stroke-width="1"/><g fill="none" stroke="#bdbdbd" stroke-width="0.9"><rect x="675" y="51" width="6" height="6"/><path d="M678 45.5v5 M678 57v6 M669.5 54h5.5 M681 54h5.5 M676 47.5l2-2 2 2 M676 61l2 2 2-2 M671.5 52l-2 2 2 2 M684.5 52l2 2-2 2"/></g><g fill="none" stroke="#bdbdbd" stroke-width="0.9"><rect x="700" y="50.5" width="6.5" height="6.5"/><path d="M698 47.5 a8.5 8.5 0 1 1 -2.5 6" /><path d="M695.5 46.5v3.5h3.5" /><path d="M695.5 56 a8.5 8.5 0 0 0 3 4" stroke-dasharray="1.2 1"/></g><g fill="none" stroke="#bdbdbd" stroke-width="0.9"><rect x="720.5" y="45.5" width="17.5" height="17.5" stroke-dasharray="1.5 1.2"/><rect x="726" y="51" width="6.5" height="6.5"/><path d="M721.5 46.5l4 4 M737 46.5l-4 4 M721.5 62l4-4 M737 62l-4-4"/></g><g fill="none" stroke="#bdbdbd" stroke-width="0.9"><path d="M754.5 45.5 L762 52.5 L754.5 59.5 L747 52.5 Z"/><path d="M745 63.5h18 M750 56.5l-4 4 M746 60.5h2.5 M746 60.5v-2.5"/></g><g fill="none" stroke="#bdbdbd" stroke-width="0.9"><rect x="770.5" y="45.5" width="18" height="17.5" rx="1"/><path d="M770.5 54.3h18" stroke-dasharray="2 1"/></g><g fill="none" stroke="#bdbdbd" stroke-width="0.9"><rect x="800.5" y="45" width="14" height="12" rx="1"/><rect x="795.5" y="50" width="14" height="12.5" rx="1"/><rect x="801" y="50.5" width="8" height="6.5" fill="#cfcfcf" stroke="none"/></g><g fill="none" stroke="#bdbdbd" stroke-width="0.9"><path d="M822 63.5 V45.5 H840 V57 M822 49.5 h12.5 V57 M825 51 V63 M828 51 V63 M831 51 V63"/><path d="M834.5 63 l4.5 -5 1 1 -4.5 5z" fill="#bdbdbd"/></g><g fill="none" stroke="#bdbdbd" stroke-width="0.9"><path d="M860 63.5 H847 V45.5 H865.5 V57"/><path d="M853.5 46 l1 2 -1 2 1 2 -1 2 1 2 -1 2 1 2 -1 2 1 2"/><path d="M859.5 63 l4.5 -5 1 1 -4.5 5z" fill="#bdbdbd"/></g><g fill="none" stroke="#bdbdbd" stroke-width="0.9"><path d="M885 63.5 H872.5 V45.5 H891 V57"/><path d="M874.5 48.5h6 M875 51h9 M874.5 53.5h7 M875 56h9 M874.5 58.5h6 M874.5 61h6" stroke-dasharray="1 0.8"/><path d="M884.5 63 l4.5 -5 1 1 -4.5 5z" fill="#bdbdbd"/></g><path d="M899 46.5 h17 a1.5 1.5 0 0 1 1.5 1.5 v1.5 a1.5 1.5 0 0 1 -1.5 1.5 h-5.5 v11.5 a1.5 1.5 0 0 1 -1.5 1.5 h-2.5 a1.5 1.5 0 0 1 -1.5 -1.5 v-11.5 h-5 a1.5 1.5 0 0 1 -1.5 -1.5 v-1.5 a1.5 1.5 0 0 1 1.5 -1.5z" fill="#fff" stroke="#444" stroke-width="1.3"/><g fill="none" stroke="#bdbdbd" stroke-width="0.9"><path d="M924 49.5h18 M924 54.5h18 M924 49.5v5 M934 45.5v4 M938 45.5v4 M934 54.5v9 M938 54.5v9 M934 63.5h4"/><circle cx="928" cy="52" r="2"/></g><g fill="none" stroke="#bdbdbd" stroke-width="0.9"><rect x="948.5" y="57" width="19" height="6.5" rx="1"/><path d="M950 55.5 h17 M952.5 52 l3 -6 12 4 -2.5 5z"/></g><g fill="none" stroke="#bdbdbd" stroke-width="0.9"><rect x="977.5" y="48.5" width="13" height="12"/><circle cx="977.5" cy="48.5" r="2.5"/><circle cx="990.5" cy="48.5" r="2.5"/><circle cx="977.5" cy="60.5" r="2.5"/><circle cx="990.5" cy="60.5" r="2.5"/></g></svg>
</body></html>
